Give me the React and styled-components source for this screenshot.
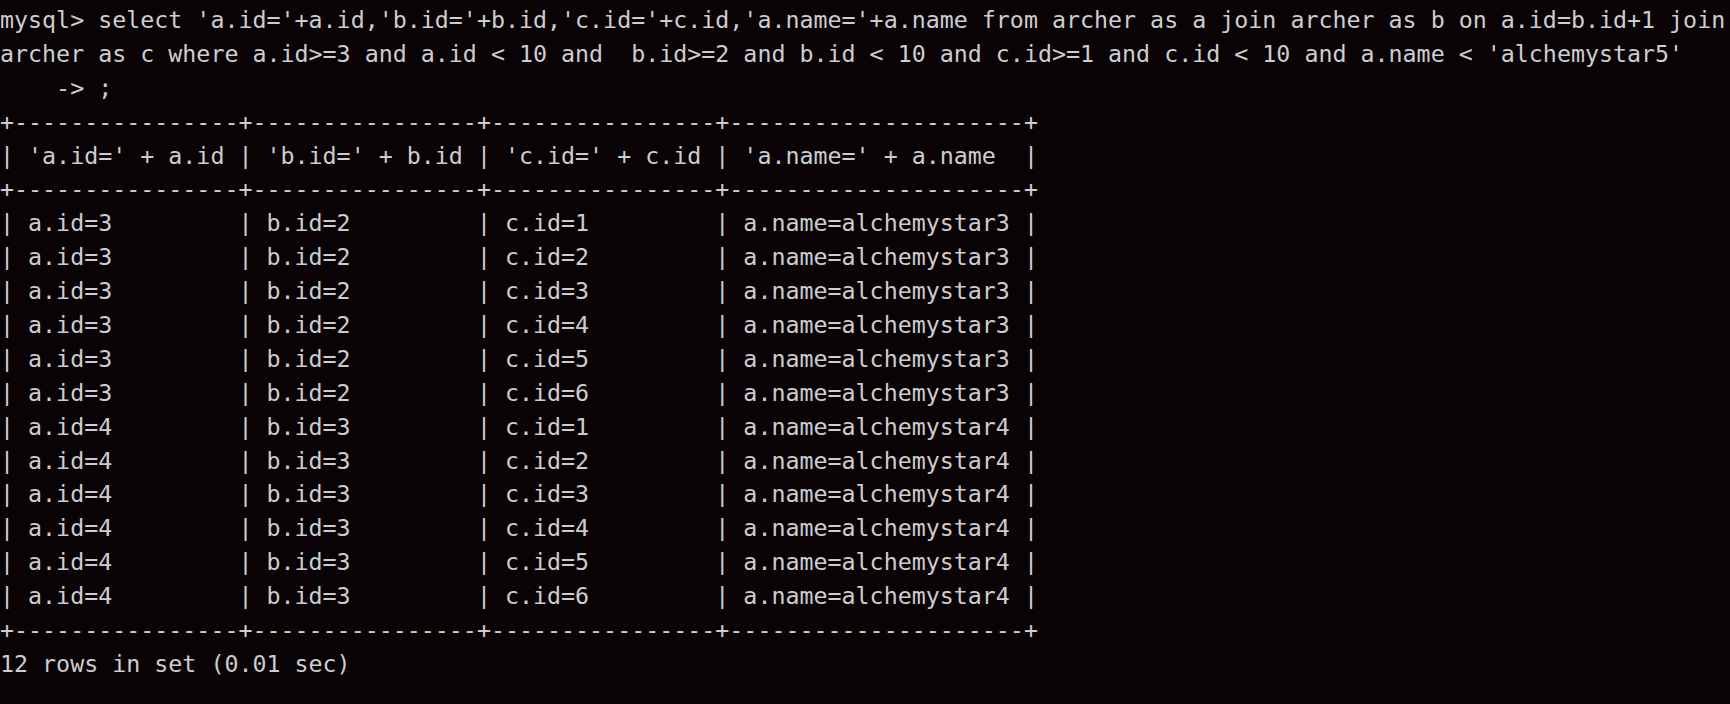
import styled, { createGlobalStyle } from 'styled-components'

const GlobalStyle = createGlobalStyle`
  html, body {
    margin: 0;
    padding: 0;
    background: #0a0305;
  }
`

const query = [
  "mysql> select 'a.id='+a.id,'b.id='+b.id,'c.id='+c.id,'a.name='+a.name from archer as a join archer as b on a.id=b.id+1 join",
  "archer as c where a.id>=3 and a.id < 10 and  b.id>=2 and b.id < 10 and c.id>=1 and c.id < 10 and a.name < 'alchemystar5'",
  '    -> ;'
]

const widths = [14, 14, 14, 19]
const header = ["'a.id=' + a.id", "'b.id=' + b.id", "'c.id=' + c.id", "'a.name=' + a.name"]

const rows = []
for (const [a, b, n] of [[3, 2, 3], [4, 3, 4]]) {
  for (let c = 1; c <= 6; c++) {
    rows.push([`a.id=${a}`, `b.id=${b}`, `c.id=${c}`, `a.name=alchemystar${n}`])
  }
}

const border = '+' + widths.map((w) => '-'.repeat(w + 2)).join('+') + '+'
const formatRow = (cells) =>
  '| ' + cells.map((c, i) => c.padEnd(widths[i])).join(' | ') + ' |'

export default function App() {
  const lines = [
    ...query,
    border,
    formatRow(header),
    border,
    ...rows.map(formatRow),
    border,
    '12 rows in set (0.01 sec)'
  ]
  return (
    <>
      <GlobalStyle />
      <Terminal>
        {lines.map((l, i) => (
          <Line key={i}>{l}</Line>
        ))}
      </Terminal>
    </>
  )
}

const Terminal = styled.div`
  width: 1730px;
  height: 704px;
  box-sizing: border-box;
  padding: 3px 0 0 0;
  background: #0a0305;
  color: #cbcdd1;
  font-family: "DejaVu Sans Mono", "Liberation Mono", monospace;
  font-size: 23.3px;
  overflow: hidden;
`
const Line = styled.div`
  white-space: pre;
  line-height: 33.9px;
  height: 33.9px;
`
